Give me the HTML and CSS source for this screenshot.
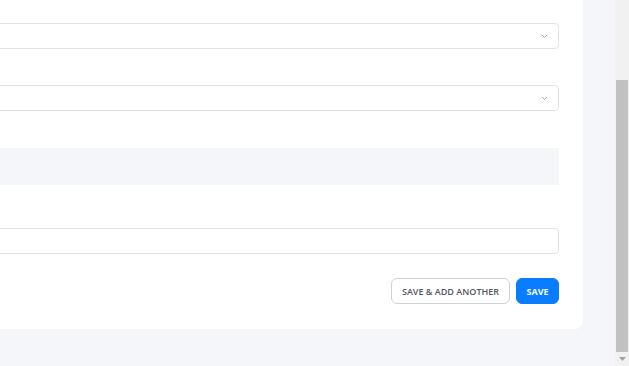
FILE: index.html
```html
<!DOCTYPE html>
<html lang="en">
<head>
    <meta charset="UTF-8">
    <meta name="viewport" content="width=device-width, initial-scale=1.0">
    <title>Edit record</title>
    <link rel="stylesheet" href="styles.css">
</head>
<body>
    <div class="viewport">
        <form class="form-card">
            <div class="field">
                <div class="select-box">
                    <span class="select-value"></span>
                    <svg class="chevron" width="7" height="5" viewBox="0 0 7 5"><path d="M1 1l2.5 2.5L6 1" fill="none" stroke="#a9acb8" stroke-width="1"/></svg>
                </div>
            </div>

            <div class="field">
                <div class="select-box">
                    <span class="select-value"></span>
                    <svg class="chevron" width="7" height="5" viewBox="0 0 7 5"><path d="M1 1l2.5 2.5L6 1" fill="none" stroke="#a9acb8" stroke-width="1"/></svg>
                </div>
            </div>

            <div class="field">
                <div class="readonly-box"></div>
            </div>

            <div class="field">
                <input class="text-input" type="text">
            </div>

            <div class="form-actions">
                <button type="button" class="btn btn-outline">SAVE &amp; ADD ANOTHER</button>
                <button type="button" class="btn btn-primary">SAVE</button>
            </div>
        </form>
    </div>

    <div class="scrollbar">
        <div class="scroll-track">
            <div class="scroll-thumb"></div>
        </div>
        <div class="scroll-arrow">
            <svg width="7" height="4" viewBox="0 0 7 4"><path d="M0 0h7L3.5 4z" fill="#a3a3a3"/></svg>
        </div>
    </div>
</body>
</html>
```

FILE: styles.css
```css
* {
    margin: 0;
    padding: 0;
    box-sizing: border-box;
}

body {
    font-family: 'Open Sans', 'Liberation Sans', sans-serif;
    background: #f5f6fa;
    height: 366px;
    overflow: hidden;
    display: flex;
}

.viewport {
    flex: 1;
    padding-right: 32px;
    overflow: hidden;
}

.form-card {
    margin-left: -60px;
    background: #fff;
    border-radius: 0 0 8px 0;
    padding: 23px 24px 25px 40px;
    display: flex;
    flex-direction: column;
}

.field + .field {
    margin-top: 36px;
}

.field:nth-child(3) {
    margin-top: 37px;
}

.field:nth-child(4) {
    margin-top: 43px;
}

.select-box {
    height: 26px;
    border: 1px solid #e1e2ec;
    border-radius: 4px;
    display: flex;
    align-items: center;
    justify-content: space-between;
    padding: 0 10px 0 12px;
    background: #fff;
}

.chevron {
    display: block;
}

.readonly-box {
    height: 37px;
    background: #f5f6fa;
}

.text-input {
    display: block;
    width: 100%;
    height: 26px;
    border: 1px solid #e1e2ec;
    border-radius: 4px;
    background: #fff;
    outline: none;
}

.form-actions {
    margin-top: 24px;
    display: flex;
    justify-content: flex-end;
    gap: 6px;
}

.btn {
    height: 26px;
    border-radius: 6px;
    font-family: inherit;
    font-size: 9px;
    font-weight: 600;
    cursor: pointer;
}

.btn-outline {
    width: 119px;
    background: #fff;
    border: 1px solid #cfd1d8;
    color: #55575f;
}

.btn-primary {
    width: 43px;
    background: #0a7cff;
    border: 1px solid #0a7cff;
    color: #fff;
    font-weight: 700;
}

.scrollbar {
    width: 14px;
    background: #f1f1f1;
    display: flex;
    flex-direction: column;
}

.scroll-track {
    flex: 1;
    padding: 80px 1px 0 1px;
    display: flex;
    flex-direction: column;
}

.scroll-thumb {
    height: 272px;
    background: #c1c1c1;
}

.scroll-arrow {
    height: 14px;
    display: flex;
    align-items: center;
    justify-content: center;
}

.scroll-arrow svg {
    display: block;
}
```
